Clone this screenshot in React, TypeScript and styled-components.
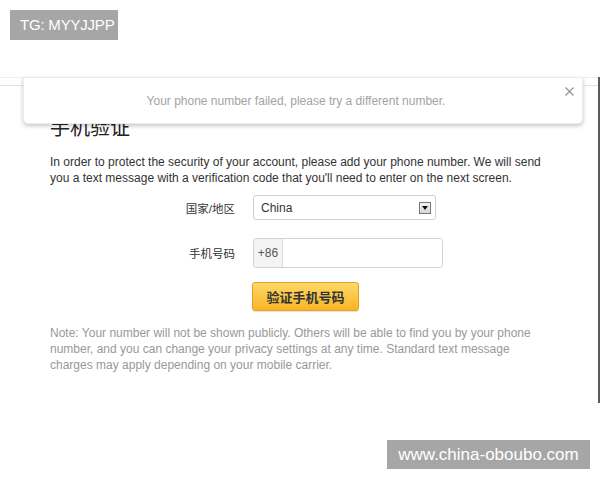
import React from "react";
import styled, { createGlobalStyle } from "styled-components";

const Global = createGlobalStyle`
  html, body { margin: 0; padding: 0; background: #fff; }
  body { font-family: "Liberation Sans", Arial, "Noto Sans CJK SC", sans-serif; width: 600px; height: 480px; overflow: hidden; }
`;

const TopBar = styled.div`
  height: 77px;
  padding: 10px 0 0 10px;
  box-sizing: border-box;
`;

const Badge = styled.div`
  display: inline-block;
  height: 30px;
  line-height: 30px;
  padding: 0 4px 0 10px;
  background: #a6a6a6;
  color: #fff;
  font-size: 15px;
  letter-spacing: -0.2px;
  font-family: "Liberation Sans", Arial, sans-serif;
`;

const Frame = styled.div`
  position: relative;
  height: 326px;
  border-right: 2px solid #5a5a5a;
  box-sizing: border-box;
`;

const HeaderStrip = styled.div`
  height: 8px;
  border-top: 1px solid #f0f0f0;
  border-bottom: 1px solid #e3e3e3;
  box-sizing: border-box;
  height: 9px;
`;

const Alert = styled.div`
  position: absolute;
  top: 0;
  left: 23px;
  width: 560px;
  height: 47px;
  box-sizing: border-box;
  background: #fff;
  border: 1px solid #ececec;
  border-radius: 0 0 5px 5px;
  box-shadow: 0 2px 4px rgba(0, 0, 0, 0.22);
  display: flex;
  align-items: center;
  justify-content: center;
  padding: 0 28px 0 14px;
  color: #a3a3a3;
  font-size: 12px;
`;

const Close = styled.button`
  position: absolute;
  top: 8px;
  right: 8px;
  width: 10px;
  height: 10px;
  padding: 0;
  border: 0;
  background: transparent;
  display: flex;
  align-items: center;
  justify-content: center;
`;

const Content = styled.div`
  width: 500px;
  padding-left: 50px;
`;

const Heading = styled.h2`
  margin: 27px 0 0;
  font-family: "Noto Sans CJK SC", sans-serif;
  font-weight: 400;
  font-size: 20px;
  line-height: 28px;
  color: #222;
`;

const Intro = styled.p`
  margin: 13px 0 0;
  font-size: 12px;
  line-height: 16px;
  color: #333;
`;

const Form = styled.div`
  display: grid;
  grid-template-columns: 185px auto;
  column-gap: 18px;
  align-items: center;
  justify-items: start;
  margin-top: 9px;
`;

const Label = styled.label<{ $mt?: number }>`
  justify-self: end;
  font-family: "Liberation Sans", Arial, "Noto Sans CJK SC", sans-serif;
  font-size: 11.5px;
  color: #333;
  margin-top: ${(p) => p.$mt ?? 0}px;
`;

const Select = styled.div`
  width: 183px;
  height: 25px;
  box-sizing: border-box;
  border: 1px solid #cfcfcf;
  border-radius: 3px;
  display: flex;
  align-items: center;
  justify-content: space-between;
  padding: 0 4px 0 7px;
  font-size: 12px;
  color: #333;
`;

const Arrow = styled.span`
  width: 12px;
  height: 12px;
  box-sizing: border-box;
  border: 1px solid #777;
  background: linear-gradient(#f4f4f4, #d6d6d6);
  display: flex;
  align-items: center;
  justify-content: center;
`;

const InputGroup = styled.div`
  margin-top: 18px;
  width: 190px;
  height: 30px;
  box-sizing: border-box;
  border: 1px solid #d2d2d2;
  border-radius: 3px;
  display: flex;
  overflow: hidden;
`;

const Addon = styled.span`
  width: 28px;
  background: #f4f4f4;
  border-right: 1px solid #dcdcdc;
  display: flex;
  align-items: center;
  justify-content: center;
  font-size: 12px;
  color: #555;
`;

const Field = styled.input`
  flex: 1;
  border: 0;
  outline: none;
  min-width: 0;
`;

const Submit = styled.button`
  grid-column: 2;
  margin: 14px 0 0 -1px;
  width: 107px;
  height: 29px;
  border: 1px solid #e5a11f;
  border-radius: 3px;
  background: linear-gradient(#fed867, #f8b526);
  box-shadow: 0 1px 1px rgba(0, 0, 0, 0.12);
  font-family: "Noto Sans CJK SC", sans-serif;
  font-weight: 700;
  font-size: 13px;
  color: #333;
  padding: 0;
`;

const Note = styled.p`
  margin: 14px 0 0;
  font-size: 12px;
  line-height: 16px;
  color: #999;
`;

const Footer = styled.div`
  display: flex;
  justify-content: flex-end;
  padding: 37px 10px 0 0;
`;

const Watermark = styled.div`
  width: 203px;
  height: 29px;
  line-height: 29px;
  text-align: center;
  background: #a6a6a6;
  color: #fff;
  font-size: 17px;
`;

export default function App() {
  return (
    <>
      <Global />
      <TopBar>
        <Badge>TG: MYYJJPP</Badge>
      </TopBar>
      <Frame>
        <HeaderStrip />
        <Alert>
          Your phone number failed, please try a different number.
          <Close aria-label="close">
            <svg width="9" height="9" viewBox="0 0 9 9">
              <path d="M0.5 0.5 L8.5 8.5 M8.5 0.5 L0.5 8.5" stroke="#9a9a9a" strokeWidth="1.4" />
            </svg>
          </Close>
        </Alert>
        <Content>
          <Heading>手机验证</Heading>
          <Intro>
            In order to protect the security of your account, please add your phone number. We will send
            you a text message with a verification code that you'll need to enter on the next screen.
          </Intro>
          <Form>
            <Label>国家/地区</Label>
            <Select>
              China
              <Arrow>
                <svg width="6" height="4" viewBox="0 0 6 4">
                  <path d="M0 0 L6 0 L3 4 Z" fill="#111" />
                </svg>
              </Arrow>
            </Select>
            <Label $mt={18}>手机号码</Label>
            <InputGroup>
              <Addon>+86</Addon>
              <Field />
            </InputGroup>
            <Submit>验证手机号码</Submit>
          </Form>
          <Note>
            Note: Your number will not be shown publicly. Others will be able to find you by your phone
            number, and you can change your privacy settings at any time. Standard text message
            charges may apply depending on your mobile carrier.
          </Note>
        </Content>
      </Frame>
      <Footer>
        <Watermark>www.china-oboubo.com</Watermark>
      </Footer>
    </>
  );
}
